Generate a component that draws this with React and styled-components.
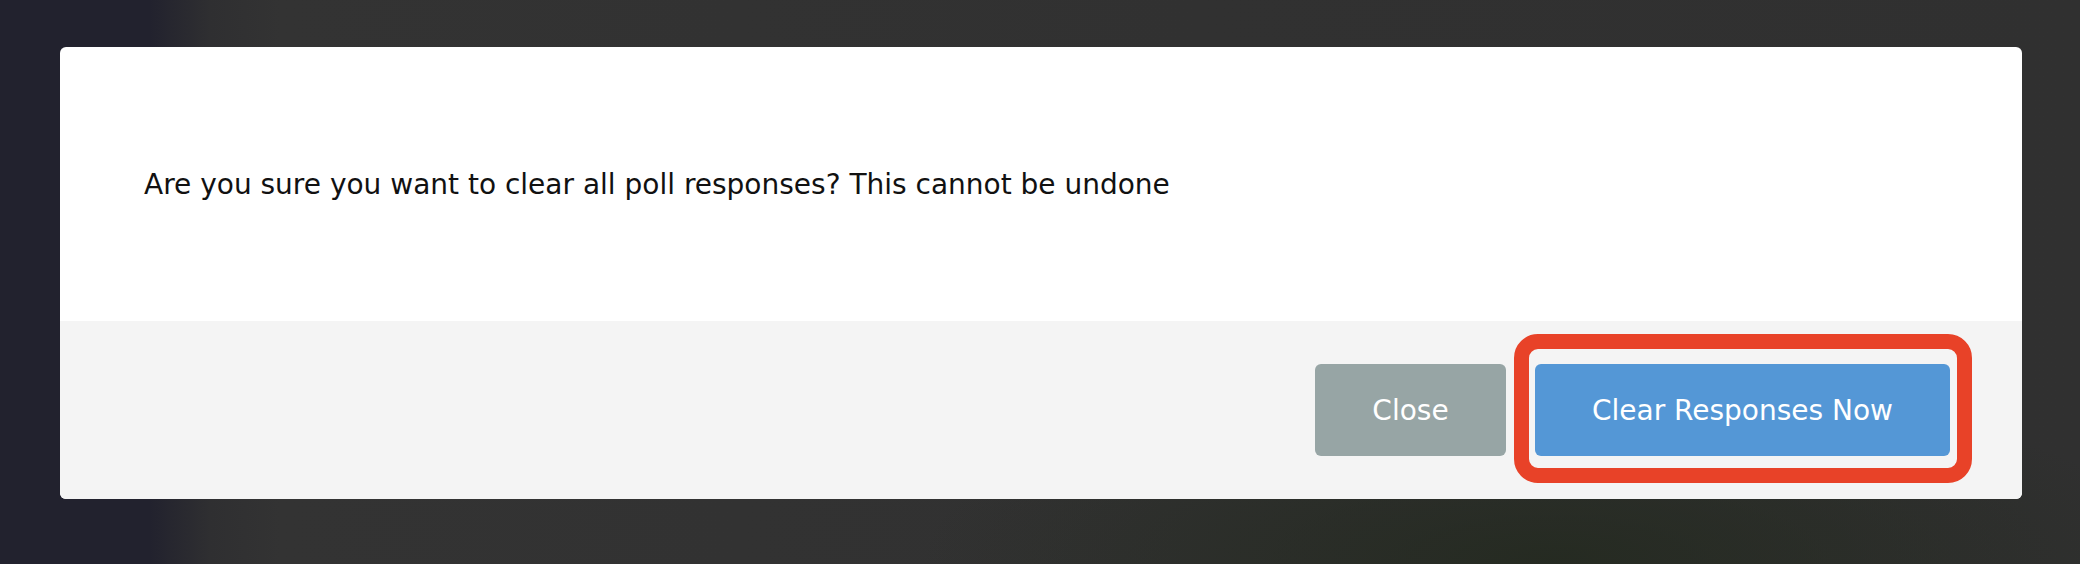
import React from "react";
import styled, { createGlobalStyle } from "styled-components";

const Global = createGlobalStyle`
  html, body { margin: 0; padding: 0; }
  body {
    width: 2080px;
    height: 564px;
    overflow: hidden;
    font-family: "DejaVu Sans", "Liberation Sans", sans-serif;
  }
`;

const Backdrop = styled.div`
  width: 2080px;
  height: 564px;
  box-sizing: border-box;
  padding: 47px 58px 0 60px;
  background:
    radial-gradient(ellipse 900px 260px at 1550px 560px, rgba(36, 42, 32, 0.9), rgba(36, 42, 32, 0) 70%),
    linear-gradient(to right, #22222e 0px, #22222e 150px, #2f2f31 210px, #333333 280px, #313131 1200px, #303030 2080px);
`;

const Modal = styled.div`
  width: 1962px;
  height: 452px;
  border-radius: 6px;
  overflow: hidden;
  display: flex;
  flex-direction: column;
  background: #ffffff;
`;

const Body = styled.div`
  height: 274px;
  display: flex;
  align-items: center;
  padding: 0 0 0 84px;
  box-sizing: border-box;
`;

const Message = styled.p`
  margin: 0;
  font-size: 28px;
  color: #111111;
`;

const Footer = styled.div`
  flex: 1;
  background: #f4f4f4;
  display: flex;
  justify-content: flex-end;
  align-items: center;
  gap: 29px;
  padding: 0 72px 0 0;
`;

const Button = styled.button`
  position: relative;
  height: 92px;
  width: ${(p) => p.$w}px;
  border: none;
  border-radius: 6px;
  background: ${(p) => p.$bg};
  color: #ffffff;
  font-family: "DejaVu Sans", "Liberation Sans", sans-serif;
  font-size: 28px;
  padding: 0;
  cursor: pointer;
`;

const Highlight = styled.span`
  position: absolute;
  left: -21px;
  top: -30px;
  right: -22px;
  bottom: -27px;
  border: 15px solid #e84228;
  border-radius: 24px;
  pointer-events: none;
`;

export default function App() {
  return (
    <>
      <Global />
      <Backdrop>
        <Modal>
          <Body>
            <Message>Are you sure you want to clear all poll responses? This cannot be undone</Message>
          </Body>
          <Footer>
            <Button $w={191} $bg="#97a5a5">Close</Button>
            <Button $w={415} $bg="#5497d6">
              Clear Responses Now
              <Highlight />
            </Button>
          </Footer>
        </Modal>
      </Backdrop>
    </>
  );
}
